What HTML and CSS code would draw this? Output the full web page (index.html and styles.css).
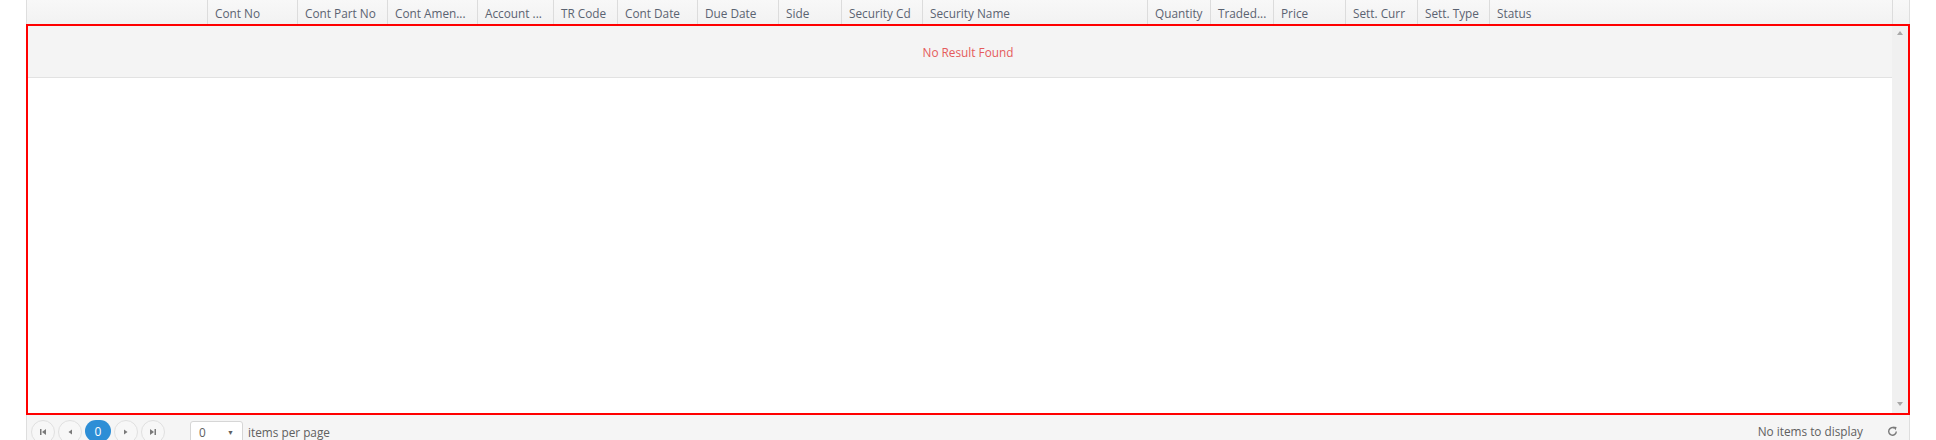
FILE: index.html
```html
<!DOCTYPE html>
<html>
<head>
<meta charset="utf-8">
<link rel="stylesheet" href="styles.css">
</head>
<body>
<div class="grid">
  <div class="grid-header">
    <div class="th th-blank"></div>
    <div class="th">Cont No</div>
    <div class="th">Cont Part No</div>
    <div class="th">Cont Amen...</div>
    <div class="th">Account ...</div>
    <div class="th">TR Code</div>
    <div class="th">Cont Date</div>
    <div class="th">Due Date</div>
    <div class="th">Side</div>
    <div class="th">Security Cd</div>
    <div class="th">Security Name</div>
    <div class="th">Quantity</div>
    <div class="th">Traded...</div>
    <div class="th">Price</div>
    <div class="th">Sett. Curr</div>
    <div class="th">Sett. Type</div>
    <div class="th">Status</div>
    <div class="th th-scroll"></div>
  </div>
  <div class="grid-content">
    <div class="content-main">
      <div class="no-result">No Result Found</div>
    </div>
    <div class="scrollbar">
      <span class="arrow arrow-up"></span>
      <span class="arrow arrow-down"></span>
    </div>
  </div>
  <div class="pager">
    <div class="pager-left">
      <span class="pbtn">
        <svg width="8" height="8" viewBox="0 0 8 8"><rect x="1" y="1" width="1.5" height="6" fill="#7a7a7a"/><path d="M7 1 L3 4 L7 7 Z" fill="#7a7a7a"/></svg>
      </span>
      <span class="pbtn">
        <svg width="8" height="8" viewBox="0 0 8 8"><path d="M6 1.5 L2.5 4 L6 6.5 Z" fill="#7a7a7a"/></svg>
      </span>
      <span class="pbtn pbtn-active">0</span>
      <span class="pbtn">
        <svg width="8" height="8" viewBox="0 0 8 8"><path d="M2 1.5 L5.5 4 L2 6.5 Z" fill="#7a7a7a"/></svg>
      </span>
      <span class="pbtn">
        <svg width="8" height="8" viewBox="0 0 8 8"><path d="M1 1 L5 4 L1 7 Z" fill="#7a7a7a"/><rect x="5.5" y="1" width="1.5" height="6" fill="#7a7a7a"/></svg>
      </span>
      <span class="pselect"><span class="pselect-val">0</span><span class="pselect-arrow">&#9660;</span></span>
      <span class="ptext">items per page</span>
    </div>
    <div class="pager-right">
      <span class="pinfo">No items to display</span>
      <svg class="refresh" width="11" height="11" viewBox="0 0 11 11"><path d="M7.6 2.2 A3.8 3.8 0 1 0 9.3 5.5" fill="none" stroke="#7a7a7a" stroke-width="1.4"/><path d="M6 0.6 L9.6 0.9 L8.6 4.2 Z" fill="#7a7a7a"/></svg>
    </div>
  </div>
</div>
</body>
</html>
```

FILE: styles.css
```css
html, body {
  margin: 0;
  padding: 0;
  background: #ffffff;
  font-family: "Open Sans", "Noto Sans", "Liberation Sans", sans-serif;
  font-size: 11.8px;
  color: #5a6270;
  overflow: hidden;
}

.grid {
  margin-left: 26px;
  width: 1884px;
  box-sizing: border-box;
  border-left: 1px solid #dedede;
  border-right: 1px solid #dedede;
}

.grid-header {
  display: grid;
  grid-template-columns: 180px 90px 90px 90px 76px 64px 80px 81px 63px 81px 225px 63px 63px 72px 72px 72px 403px 17px;
  height: 24px;
  background: linear-gradient(#f8f8f8, #f2f2f2);
}

.th {
  box-sizing: border-box;
  border-left: 1px solid #dcdcdc;
  padding-left: 7px;
  line-height: 26px;
  white-space: nowrap;
  overflow: hidden;
  color: #5b6371;
}

.th-blank {
  border-left: none;
}

.grid-content {
  display: flex;
  height: 391px;
  margin-left: -1px;
  margin-right: -1px;
  border: 2px solid #ff0000;
  box-sizing: border-box;
  background: #ffffff;
}

.content-main {
  flex: 1;
}

.no-result {
  height: 52px;
  box-sizing: border-box;
  border-bottom: 1px solid #e2e2e2;
  background: #f4f4f4;
  color: #e55b5b;
  text-align: center;
  line-height: 52px;
  padding-left: 16px;
}

.scrollbar {
  width: 16px;
  background: #f0f0f0;
  display: flex;
  flex-direction: column;
  justify-content: space-between;
  align-items: center;
  padding: 5px 0 7px;
  box-sizing: border-box;
}

.arrow {
  width: 0;
  height: 0;
  border-left: 3.5px solid transparent;
  border-right: 3.5px solid transparent;
}

.arrow-up {
  border-bottom: 4px solid #a8a8a8;
}

.arrow-down {
  border-top: 4px solid #a8a8a8;
}

.pager {
  display: flex;
  justify-content: space-between;
  align-items: flex-start;
  height: 30px;
  background: #f5f5f5;
  padding-top: 5px;
  box-sizing: border-box;
}

.pager-left {
  display: flex;
  align-items: center;
  padding-left: 4px;
}

.pbtn {
  width: 24px;
  height: 24px;
  border-radius: 50%;
  border: 1px solid #e0e0e0;
  box-sizing: border-box;
  display: flex;
  align-items: center;
  justify-content: center;
  margin-right: 3px;
  background: #f7f7f7;
}

.pbtn-active {
  width: 26px;
  height: 22px;
  border-radius: 13px;
  border: none;
  background: #2d8ed6;
  color: #ffffff;
  font-size: 12px;
  margin-top: -2px;
}

.pselect {
  margin-left: 22px;
  width: 53px;
  height: 22px;
  box-sizing: border-box;
  border: 1px solid #d6d6d6;
  border-radius: 3px;
  background: #ffffff;
  display: flex;
  align-items: center;
  justify-content: space-between;
  padding: 0 8px 0 8px;
  color: #606060;
}

.pselect-val {
  font-size: 11.8px;
}

.pselect-arrow {
  font-size: 7px;
  color: #606060;
}

.ptext {
  margin-left: 5px;
  color: #606060;
}

.pager-right {
  display: flex;
  align-items: center;
  height: 22px;
  padding-right: 11px;
}

.pinfo {
  color: #606060;
}

.refresh {
  margin-left: 24px;
}
```
